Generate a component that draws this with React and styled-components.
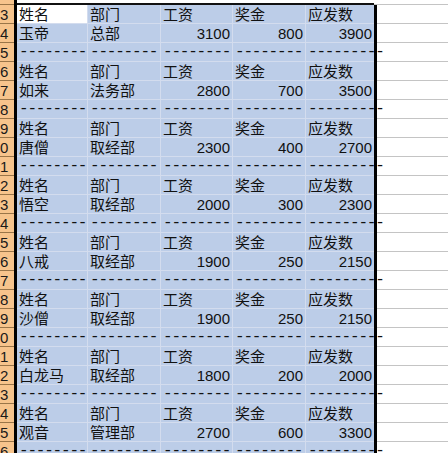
import React from "react";
import styled, { createGlobalStyle } from "styled-components";

const Global = createGlobalStyle`
  html, body { margin: 0; padding: 0; background: #fff; overflow: hidden; }
  body { width: 448px; height: 453px; }
`;

const COLS = "14px 3px 71px 73px 72px 73px 68px 3px 1fr";
const SEL = "#bccde8";
const SEL_LINE = "#d3dcee";

const Sheet = styled.div`
  width: 448px;
  height: 453px;
  overflow: hidden;
  display: flex;
  flex-direction: column;
  font-family: "Liberation Sans", "Noto Sans CJK SC", sans-serif;
  font-size: 15px;
  color: #111;
`;

const Row = styled.div`
  display: grid;
  grid-template-columns: ${COLS};
  height: ${(p) => p.$h}px;
  flex: none;
`;

const RowNum = styled.div`
  background: #f7c48c;
  border-bottom: 1px solid #9a7548;
  display: flex;
  justify-content: flex-start;
  align-items: flex-end;
  overflow: hidden;
  padding-left: 0;
  line-height: 17px;
  color: #1a1a1a;
  white-space: nowrap;
`;

const Edge = styled.div`
  background: #000;
`;

const Cell = styled.div`
  background: ${(p) => (p.$active ? "#fff" : SEL)};
  border-bottom: 1px solid ${SEL_LINE};
  border-right: ${(p) => (p.$last ? "none" : `1px solid ${SEL_LINE}`)};
  display: flex;
  align-items: flex-end;
  justify-content: ${(p) => (p.$num ? "flex-end" : "flex-start")};
  padding: 0 ${(p) => (p.$num ? "2px" : "0")} 0 ${(p) => (p.$num ? "0" : "2px")};
  line-height: 17px;
  white-space: nowrap;
  overflow: ${(p) => (p.$spill ? "visible" : "hidden")};
`;

const TopGap = styled.div`
  background: #fff;
  border-bottom: 2px solid #111;
`;

const Filler = styled.div`
  background: #fff;
  border-bottom: 1px solid #c4c4c4;
`;

const Dashes = styled.span`
  font-family: "Liberation Mono", monospace;
  font-size: 16px;
  letter-spacing: -1.2px;
  line-height: 17px;
  color: #111;
  position: relative;
  z-index: 1;
`;

const HEAD = ["姓名", "部门", "工资", "奖金", "应发数"];
const DATA = [
  ["玉帝", "总部", 3100, 800, 3900],
  ["如来", "法务部", 2800, 700, 3500],
  ["唐僧", "取经部", 2300, 400, 2700],
  ["悟空", "取经部", 2000, 300, 2300],
  ["八戒", "取经部", 1900, 250, 2150],
  ["沙僧", "取经部", 1900, 250, 2150],
  ["白龙马", "取经部", 1800, 200, 2000],
  ["观音", "管理部", 2700, 600, 3300],
];

function buildRows() {
  const rows = [];
  DATA.forEach((d) => {
    rows.push({ type: "head", values: HEAD });
    rows.push({ type: "data", values: d });
    rows.push({ type: "dash" });
  });
  return rows;
}

function SheetRow({ num, row, first }) {
  return (
    <Row $h={19}>
      <RowNum>{num % 10}</RowNum>
      <Edge />
      {[0, 1, 2, 3, 4].map((c) => {
        const last = c === 4;
        if (row.type === "dash") {
          return (
            <Cell key={c} $last={last} $spill={last}>
              <Dashes>{last ? "---------" : "--------"}</Dashes>
            </Cell>
          );
        }
        const v = row.values[c];
        const num = typeof v === "number";
        return (
          <Cell key={c} $last={last} $num={num} $active={first && c === 0}>
            {v}
          </Cell>
        );
      })}
      <Edge />
      <Filler />
    </Row>
  );
}

export default function App() {
  const rows = buildRows();
  return (
    <>
      <Global />
      <Sheet>
        <Row $h={5}>
          <RowNum />
          <Edge />
          <TopGap />
          <TopGap />
          <TopGap />
          <TopGap />
          <TopGap />
          <Filler />
          <Filler />
        </Row>
        {rows.map((r, i) => (
          <SheetRow key={i} num={13 + i} row={r} first={i === 0} />
        ))}
      </Sheet>
    </>
  );
}
